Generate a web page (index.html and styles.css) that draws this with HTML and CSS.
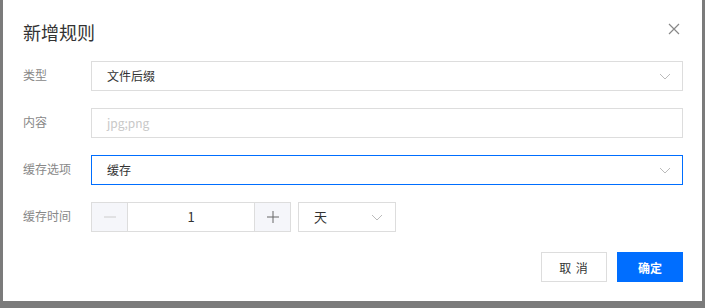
FILE: index.html
```html
<!DOCTYPE html>
<html lang="zh-CN">
<head>
  <meta charset="UTF-8" />
  <title>新增规则</title>
  <link rel="stylesheet" href="styles.css">
</head>
<body>
  <div class="dialog">
    <div class="dialog-header">
      <h3 class="dialog-title">新增规则</h3>
      <button class="dialog-close" aria-label="关闭">
        <svg viewBox="0 0 12 12" width="12" height="12">
          <path d="M1 1 L11 11 M11 1 L1 11" stroke="#888" stroke-width="1.2" fill="none" />
        </svg>
      </button>
    </div>

    <div class="form">
      <div class="form-row">
        <label class="form-label">类型</label>
        <div class="select">
          <span class="select-value">文件后缀</span>
          <svg class="chevron" viewBox="0 0 12 7" width="12" height="7">
            <path d="M1 1 L6 6 L11 1" stroke="#bbb" stroke-width="1" fill="none" />
          </svg>
        </div>
      </div>

      <div class="form-row">
        <label class="form-label">内容</label>
        <div class="input">
          <span class="placeholder">jpg;png</span>
        </div>
      </div>

      <div class="form-row">
        <label class="form-label">缓存选项</label>
        <div class="select focused">
          <span class="select-value">缓存</span>
          <svg class="chevron" viewBox="0 0 12 7" width="12" height="7">
            <path d="M1 1 L6 6 L11 1" stroke="#bbb" stroke-width="1" fill="none" />
          </svg>
        </div>
      </div>

      <div class="form-row">
        <label class="form-label">缓存时间</label>
        <div class="number-input">
          <button class="step-btn disabled">
            <svg viewBox="0 0 14 14" width="14" height="14">
              <path d="M1 7 H13" stroke="#ccc" stroke-width="1" />
            </svg>
          </button>
          <span class="number-value">1</span>
          <button class="step-btn">
            <svg viewBox="0 0 14 14" width="14" height="14">
              <path d="M1 7 H13 M7 1 V13" stroke="#666" stroke-width="1" />
            </svg>
          </button>
        </div>
        <div class="select unit">
          <span class="select-value">天</span>
          <svg class="chevron" viewBox="0 0 12 7" width="12" height="7">
            <path d="M1 1 L6 6 L11 1" stroke="#bbb" stroke-width="1" fill="none" />
          </svg>
        </div>
      </div>
    </div>

    <div class="dialog-footer">
      <button class="btn">取 消</button>
      <button class="btn primary">确定</button>
    </div>
  </div>
</body>
</html>
```

FILE: styles.css
```css
body {
  margin: 0;
  background: #7b7b7b;
  font-family: "Noto Sans CJK SC", "Noto Sans", sans-serif;
  font-size: 12px;
  color: #333;
}

.dialog {
  margin-left: 3px;
  width: 699px;
  height: 301px;
  box-sizing: border-box;
  background: #fff;
  padding: 20px 19px 19px 19px;
  display: flex;
  flex-direction: column;
}

.dialog-header {
  display: flex;
  align-items: center;
  justify-content: space-between;
  height: 24px;
}

.dialog-title {
  margin: 0 0 0 1px;
  font-size: 18px;
  font-weight: normal;
  line-height: 24px;
  color: #333;
}

.dialog-close {
  border: none;
  background: none;
  padding: 0;
  margin-right: 3px;
  width: 12px;
  height: 12px;
  display: flex;
  margin-top: -6px;
}

.form {
  margin-top: 17px;
  display: flex;
  flex-direction: column;
  gap: 17px;
}

.form-row {
  display: flex;
  align-items: center;
  height: 30px;
}

.form-label {
  width: 69px;
  flex-shrink: 0;
  color: #888;
  padding-left: 1px;
  padding-bottom: 4px;
  box-sizing: border-box;
}

.select,
.input {
  flex-grow: 1;
  height: 30px;
  box-sizing: border-box;
  border: 1px solid #dddddd;
  display: flex;
  align-items: center;
  padding: 0 11px 1px 15px;
}

.select {
  justify-content: space-between;
}

.select.focused {
  border-color: #006eff;
}

.placeholder {
  color: #c8c8c8;
}

.chevron {
  margin-top: 2px;
}

.number-input {
  display: flex;
  width: 200px;
  height: 30px;
  box-sizing: border-box;
  border: 1px solid #dddddd;
}

.step-btn {
  width: 36px;
  border: none;
  padding: 0;
  background: #f5f6fa;
  display: flex;
  align-items: center;
  justify-content: center;
}

.step-btn:first-child {
  border-right: 1px solid #dddddd;
}

.step-btn:last-child {
  border-left: 1px solid #dddddd;
}

.number-value {
  flex-grow: 1;
  text-align: center;
  line-height: 27px;
  font-size: 13px;
}

.select.unit {
  flex-grow: 0;
  width: 98px;
  margin-left: 7px;
  padding-left: 15px;
  padding-right: 12px;
  font-size: 13px;
}

.dialog-footer {
  margin-top: auto;
  display: flex;
  justify-content: flex-end;
  gap: 10px;
}

.btn {
  width: 66px;
  height: 30px;
  border: 1px solid #dddddd;
  background: #fff;
  color: #333;
  font-family: inherit;
  font-size: 12px;
  padding: 0;
  letter-spacing: 1px;
}

.btn.primary {
  background: #006eff;
  border-color: #006eff;
  color: #fff;
  font-weight: bold;
  letter-spacing: 0;
}
```
